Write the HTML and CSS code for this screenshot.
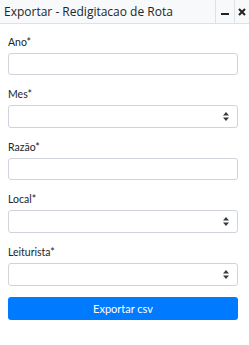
FILE: index.html
```html
<!DOCTYPE html>
<html lang="pt">
<head>
    <meta charset="UTF-8">
    <meta name="viewport" content="width=device-width, initial-scale=1.0">
    <title>Exportar - Redigitacao de Rota</title>
    <link rel="stylesheet" href="styles.css">
</head>
<body>
    <div class="titlebar">
        <span class="title">Exportar - Redigitacao de Rota</span>
        <button class="bar-btn" type="button" aria-label="Minimizar">
            <svg width="8" height="8" viewBox="0 0 8 8"><rect x="0" y="5" width="8" height="2" fill="#222"/></svg>
        </button>
        <button class="bar-btn" type="button" aria-label="Fechar">
            <svg width="8" height="8" viewBox="0 0 8 8"><path d="M1 1L7 7M7 1L1 7" stroke="#222" stroke-width="2"/></svg>
        </button>
    </div>

    <form class="export-form">
        <div class="field">
            <label for="ano">Ano*</label>
            <input type="text" id="ano" class="control">
        </div>
        <div class="field">
            <label for="mes">Mes*</label>
            <div class="select-wrap">
                <select id="mes" class="control select"></select>
                <svg class="arrows" width="6" height="9" viewBox="0 0 6 9"><path d="M0 3.5L3 0L6 3.5ZM0 5.5L3 9L6 5.5Z" fill="#343a40"/></svg>
            </div>
        </div>
        <div class="field">
            <label for="razao">Razão*</label>
            <input type="text" id="razao" class="control">
        </div>
        <div class="field">
            <label for="local">Local*</label>
            <div class="select-wrap">
                <select id="local" class="control select"></select>
                <svg class="arrows" width="6" height="9" viewBox="0 0 6 9"><path d="M0 3.5L3 0L6 3.5ZM0 5.5L3 9L6 5.5Z" fill="#343a40"/></svg>
            </div>
        </div>
        <div class="field last">
            <label for="leiturista">Leiturista*</label>
            <div class="select-wrap">
                <select id="leiturista" class="control select"></select>
                <svg class="arrows" width="6" height="9" viewBox="0 0 6 9"><path d="M0 3.5L3 0L6 3.5ZM0 5.5L3 9L6 5.5Z" fill="#343a40"/></svg>
            </div>
        </div>
        <button type="button" class="btn-export">Exportar csv</button>
    </form>
</body>
</html>
```

FILE: styles.css
```css
body {
    margin: 0;
    background-color: #fff;
    font-family: Lato, "Open Sans", sans-serif;
    color: #212529;
}

.titlebar {
    display: flex;
    align-items: stretch;
    height: 23px;
    background-color: #f8f9fa;
    border-bottom: 1px solid #dee2e6;
}

.title {
    flex: 1;
    padding-left: 4px;
    font-family: "Open Sans", sans-serif;
    font-size: 12px;
    line-height: 23px;
    color: #212529;
}

.bar-btn {
    width: 19px;
    padding: 0;
    border: none;
    border-left: 1px solid #dee2e6;
    background: transparent;
    display: flex;
    align-items: center;
    justify-content: center;
}

.bar-btn:last-child {
    width: 15px;
}

.export-form {
    width: 230px;
    padding: 11px 0 0 8px;
}

.field {
    margin-bottom: 12px;
}

.field.last {
    margin-bottom: 11px;
}

label {
    display: block;
    font-size: 10.5px;
    line-height: 15px;
    margin-bottom: 3px;
    color: #212529;
}

.control {
    display: block;
    width: 100%;
    height: 22px;
    margin: 0;
    padding: 0 6px;
    border: 1px solid #ced4da;
    border-radius: 3px;
    background-color: #fff;
    box-sizing: border-box;
    font-family: inherit;
}

.select {
    height: 23px;
    -webkit-appearance: none;
    appearance: none;
}

.select-wrap {
    position: relative;
}

.arrows {
    position: absolute;
    right: 9px;
    top: 7px;
}

.btn-export {
    display: block;
    width: 100%;
    height: 23px;
    padding: 0;
    border: none;
    border-radius: 3px;
    background-color: #007bff;
    color: #fff;
    font-family: inherit;
    font-size: 11px;
}
```
